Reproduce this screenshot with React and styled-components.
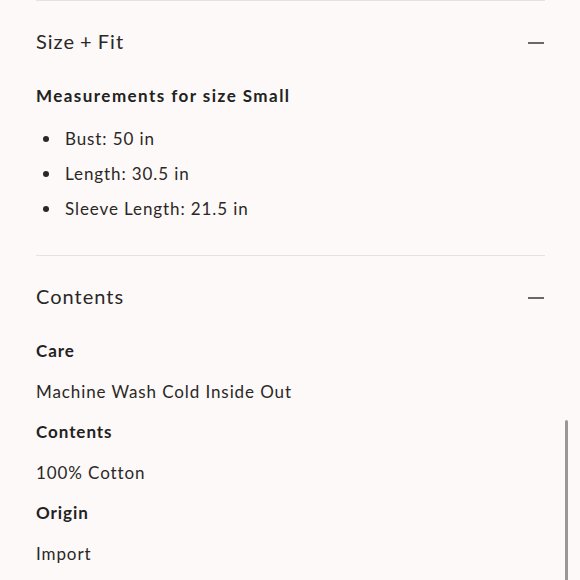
import React from "react";
import styled, { createGlobalStyle } from "styled-components";

const Global = createGlobalStyle`
  html, body { margin: 0; padding: 0; background: #fdf9f8; }
  body { font-family: "Lato", "Open Sans", sans-serif; color: #2a2826; overflow: hidden; }
`;

const Page = styled.div`
  width: 509px;
  padding: 0 35px 0 36px;
`;

const Section = styled.section`
  border-top: 1px solid #e6e2e0;
  padding-bottom: ${(p) => p.$pb || 0}px;
`;

const Header = styled.div`
  height: 83px;
  display: flex;
  align-items: center;
  justify-content: space-between;
`;

const Title = styled.h2`
  margin: 0 0 4px;
  font-size: 20px;
  font-weight: 400;
  letter-spacing: 1px;
  word-spacing: -1px;
  color: #2a2826;
`;

const Minus = styled.span`
  display: block;
  width: 16px;
  height: 2px;
  background: #6a6866;
  margin-right: 1px;
`;

const Heading = styled.h3`
  margin: 0;
  font-size: 17px;
  line-height: 24px;
  font-weight: 700;
  letter-spacing: ${(p) => p.$ls || 0.95}px;
  color: #222;
`;

const List = styled.ul`
  list-style: none;
  margin: 13px 0 0;
  padding: 0;
`;

const Item = styled.li`
  position: relative;
  padding-left: 29px;
  font-size: 17px;
  line-height: 35px;
  letter-spacing: 0.9px;
  &::before {
    content: "";
    position: absolute;
    left: 7px;
    top: 50%;
    width: 6px;
    height: 6px;
    margin-top: -3px;
    border-radius: 50%;
    background: #2a2826;
  }
`;

const Details = styled.div`
  display: flex;
  flex-direction: column;
  gap: 16.6px;
`;

const Text = styled.p`
  margin: 0;
  font-size: 17px;
  line-height: 24px;
  letter-spacing: 0.9px;
`;

const Scrollbar = styled.div`
  position: fixed;
  right: 12px;
  top: 420px;
  width: 3px;
  height: 170px;
  border-radius: 2px;
  background: #9a9896;
`;

export default function App() {
  return (
    <>
      <Global />
      <Page>
        <Section $pb={29}>
          <Header>
            <Title>Size + Fit</Title>
            <Minus />
          </Header>
          <Heading $ls={1.45}>Measurements for size Small</Heading>
          <List>
            <Item>Bust: 50 in</Item>
            <Item>Length: 30.5 in</Item>
            <Item>Sleeve Length: 21.5 in</Item>
          </List>
        </Section>
        <Section>
          <Header>
            <Title>Contents</Title>
            <Minus />
          </Header>
          <Details>
            <Heading>Care</Heading>
            <Text>Machine Wash Cold Inside Out</Text>
            <Heading>Contents</Heading>
            <Text>100% Cotton</Text>
            <Heading>Origin</Heading>
            <Text>Import</Text>
          </Details>
        </Section>
      </Page>
      <Scrollbar />
    </>
  );
}
